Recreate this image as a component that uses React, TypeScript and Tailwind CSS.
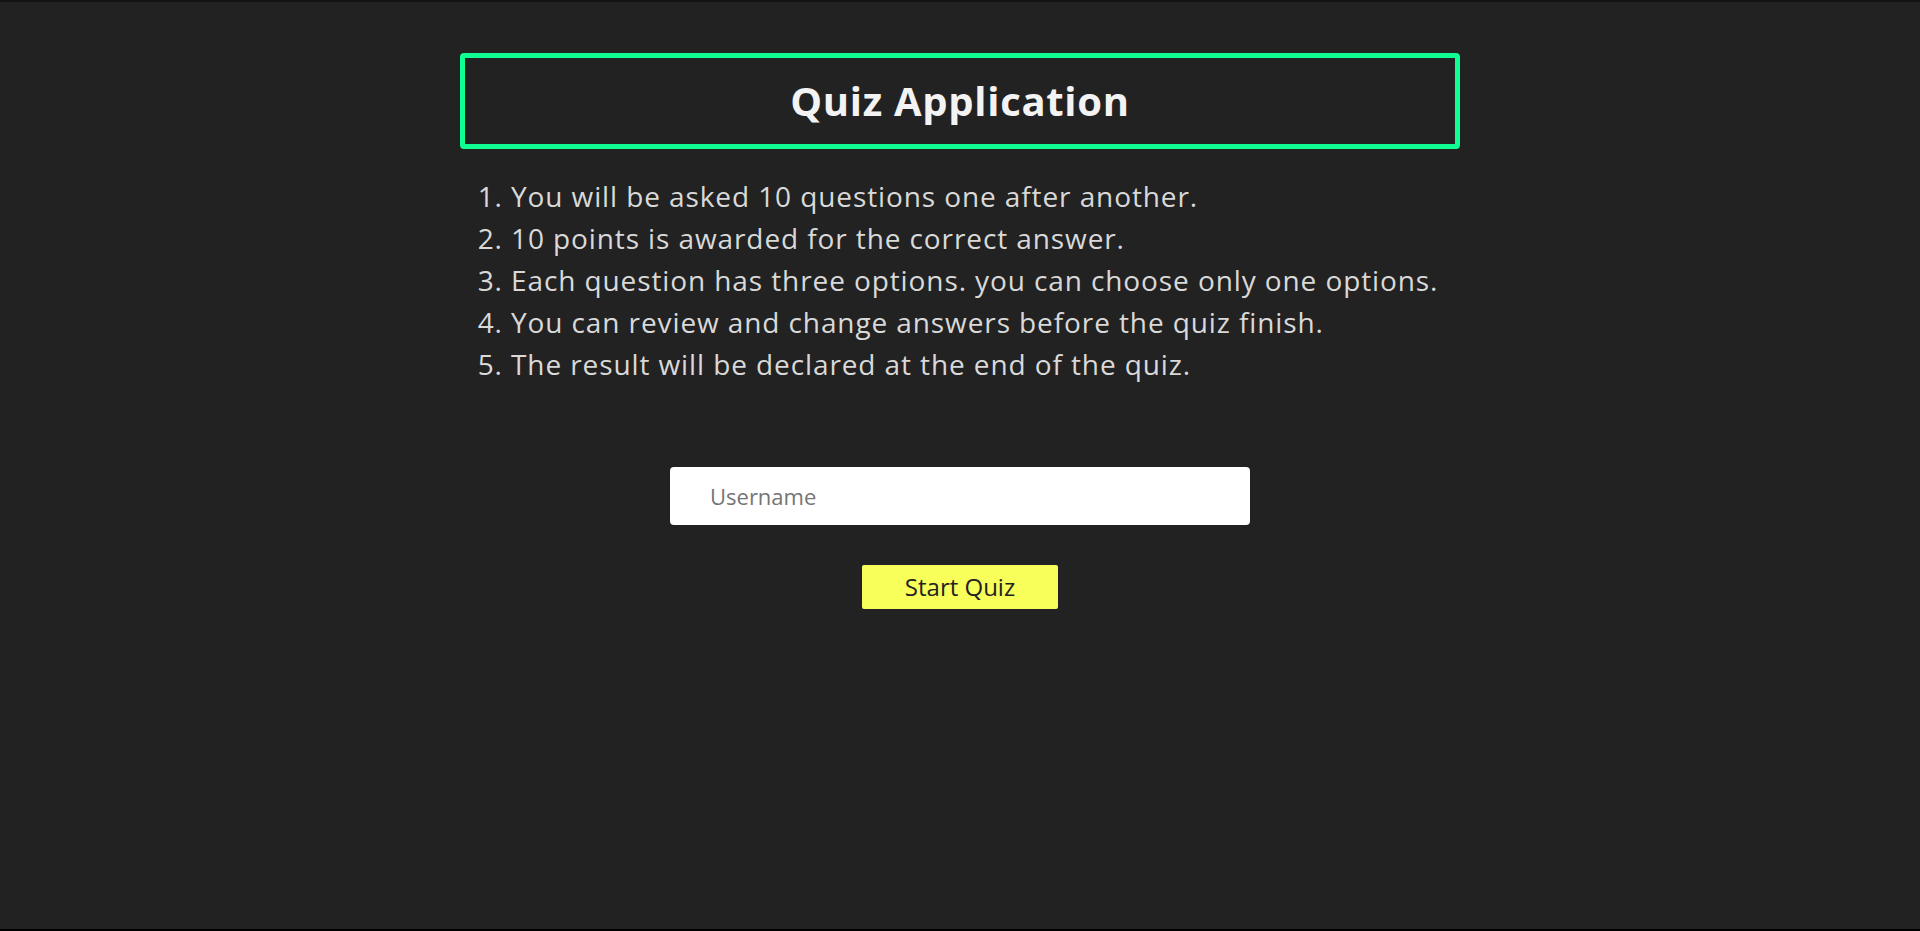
import React from "react";

const items = [
  "You will be asked 10 questions one after another.",
  "10 points is awarded for the correct answer.",
  "Each question has three options. you can choose only one options.",
  "You can review and change answers before the quiz finish.",
  "The result will be declared at the end of the quiz.",
];

export default function App() {
  return (
    <div className="h-[931px] w-full bg-black flex flex-col overflow-hidden" style={{ fontFamily: '"Open Sans", sans-serif' }}>
      <div className="h-[2px] bg-[#141414] shrink-0" />
      <div className="h-[927px] bg-[#222222] flex flex-col items-center">
        <div className="mt-[51px] w-[1000px] h-[96px] border-[5px] border-[#10ff93] rounded-[4px] flex items-center justify-center">
          <h1 className="text-[40px] font-bold text-[#f3f3f3] leading-none tracking-[0.7px]">Quiz Application</h1>
        </div>
        <div className="w-[1000px] mt-[26px]">
          <ol className="list-decimal pl-[51px] text-[28px] leading-[42px] text-[#d9d9d9] tracking-[0.9px]">
            {items.map((t) => (
              <li key={t}>{t}</li>
            ))}
          </ol>
        </div>
        <input
          placeholder="Username"
          className="mt-[82px] w-[580px] h-[58px] bg-white rounded-[4px] pl-[40px] text-[22px] text-[#222] placeholder:text-[#757575] outline-none"
        />
        <button className="mt-[40px] w-[196px] h-[44px] bg-[#f9ff5a] rounded-[2px] text-[24px] text-[#222]">
          Start Quiz
        </button>
      </div>
    </div>
  );
}
